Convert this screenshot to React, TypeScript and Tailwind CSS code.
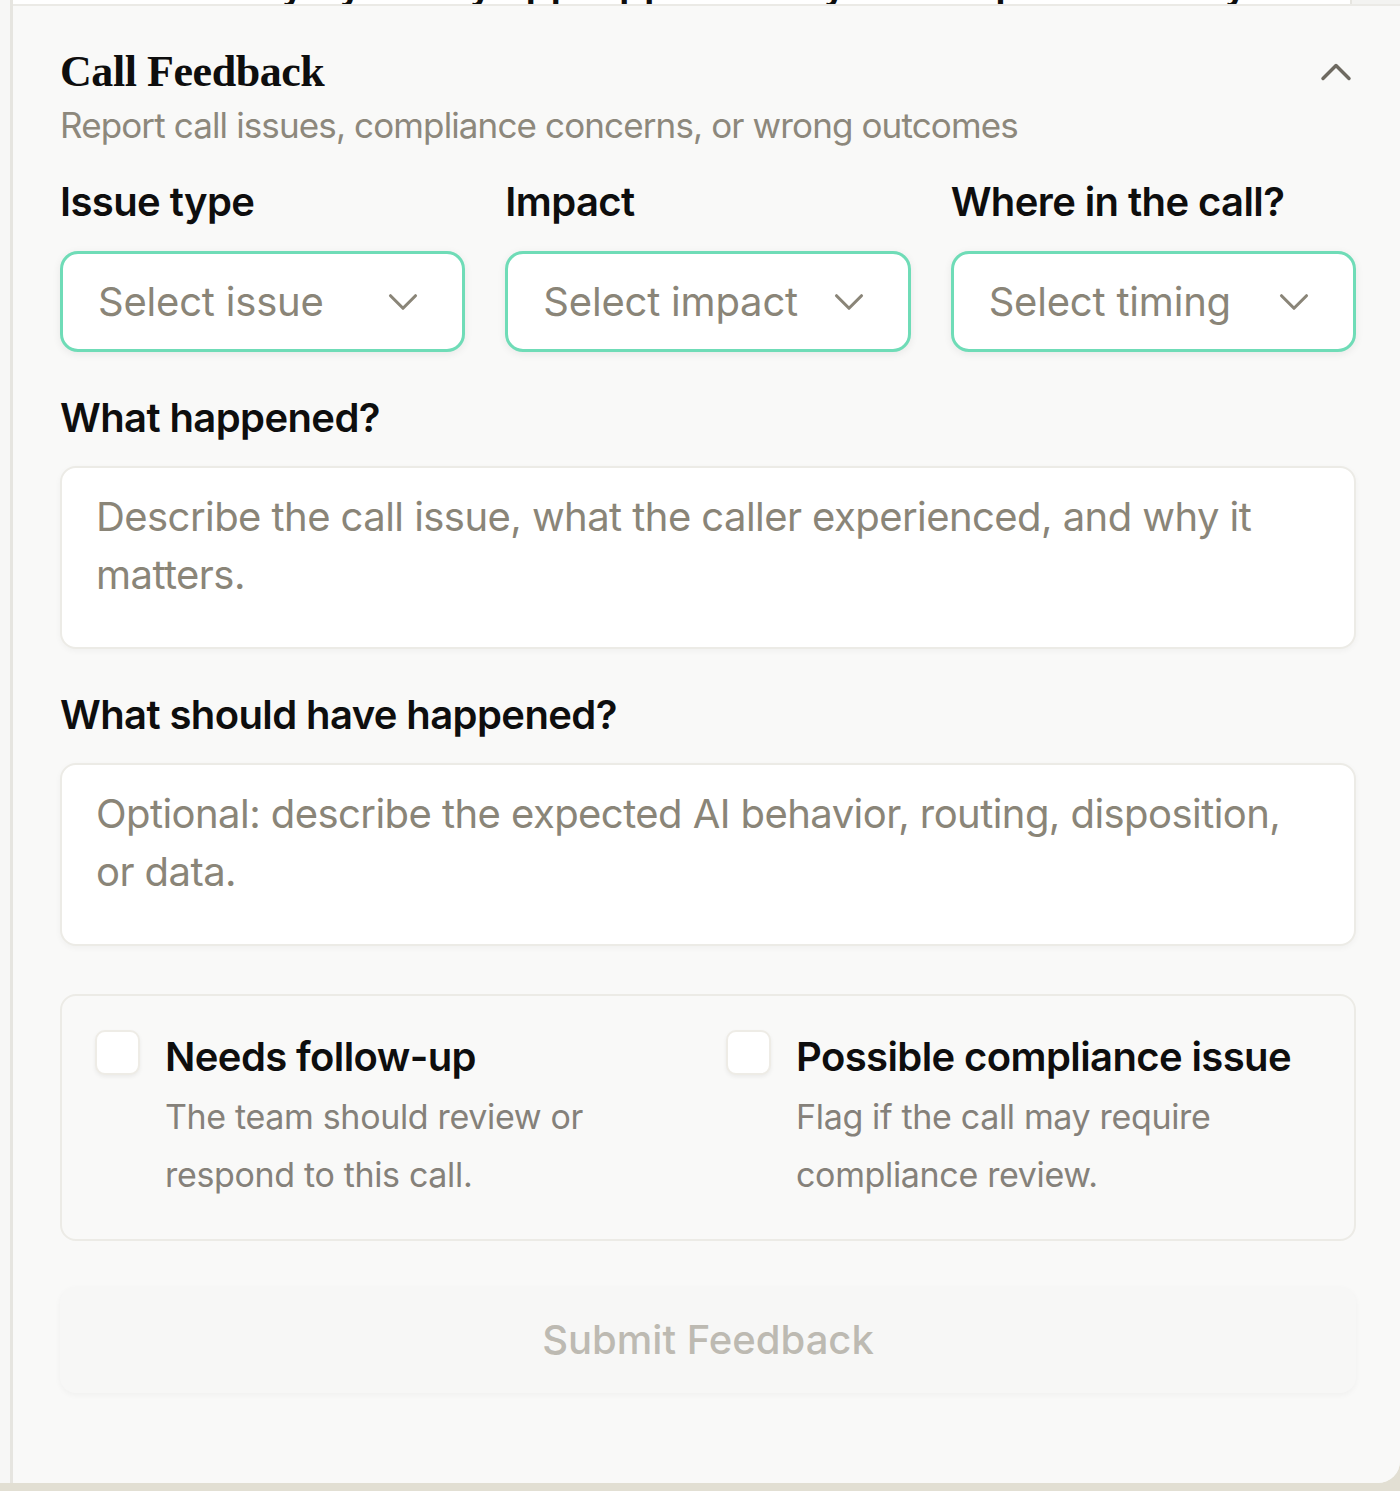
import React from 'react';
import { ChevronDown, ChevronUp } from 'lucide-react';

const selects = [
  { label: 'Issue type', placeholder: 'Select issue' },
  { label: 'Impact', placeholder: 'Select impact' },
  { label: 'Where in the call?', placeholder: 'Select timing' },
];

const flags = [
  { title: 'Needs follow-up', text: 'The team should review or respond to this call.' },
  { title: 'Possible compliance issue', text: 'Flag if the call may require compliance review.' },
];

function SelectBox({ placeholder }: { placeholder: string }) {
  return (
    <button className="w-full h-[101px] flex items-center justify-between pl-[35px] pr-[34px] bg-white border-[3px] border-[#6fdcb7] rounded-[18px] shadow-[0_2px_8px_rgba(0,0,0,0.07)]">
      <span className="text-[40px] tracking-[-0.005em] text-[#8a8578]">{placeholder}</span>
      <ChevronDown size={50} strokeWidth={1.5} className="text-[#8a8578]" />
    </button>
  );
}

function TextBox({ placeholder }: { placeholder: string }) {
  return (
    <div className="h-[183px] bg-white border-2 border-[#ecebe6] rounded-[16px] px-[34px] pt-[20px] shadow-[0_2px_6px_rgba(0,0,0,0.04)]">
      <p className="text-[40px] leading-[58px] tracking-[-0.014em] text-[#8a8578]">{placeholder}</p>
    </div>
  );
}

export default function App() {
  return (
    <div className="bg-[#e2dfd3] h-[1491px] font-['Inter',sans-serif] text-[#0e0e0e]">
      <div className="h-[1483px] bg-[#f7f7f6] pl-[10px] rounded-br-[22px] overflow-hidden">
        <div className="h-full bg-[#f9f9f8] border-l-[3px] border-[#e6e5e0]">
          <div className="h-[6px] flex border-b-2 border-[#ebeae6]">
            <div className="w-[1339px] h-[4px] bg-white border-r-2 border-[#e6e5e0] overflow-hidden">
              <p className="-mt-[40px] pl-[170px] text-[40px] leading-[50px] font-semibold whitespace-nowrap">
                Ready by Friday appl app and they also hope to hear by the deadline
              </p>
            </div>
            <div className="flex-1 bg-[#f3f3f1]" />
          </div>

          <div className="pl-[47px] pr-[44px]">
            <div className="flex items-start justify-between pt-[42px]">
              <h2 className="font-['Liberation_Serif',serif] font-bold text-[44px] leading-[48px] tracking-[-0.01em]">
                Call Feedback
              </h2>
              <ChevronUp size={52} strokeWidth={1.6} className="text-[#6e6a61] mt-[-2px] mr-[-6px]" />
            </div>
            <p className="mt-[2px] text-[35px] leading-[50px] tracking-tight text-[#8d887c]">
              Report call issues, compliance concerns, or wrong outcomes
            </p>

            <div className="mt-[27px] grid grid-cols-3 gap-x-[40px]">
              {selects.map((s) => (
                <div key={s.label}>
                  <div className="text-[40px] leading-[50px] font-semibold tracking-[-0.015em]">{s.label}</div>
                  <div className="mt-[24px]">
                    <SelectBox placeholder={s.placeholder} />
                  </div>
                </div>
              ))}
            </div>

            <div className="mt-[41px] text-[40px] leading-[50px] font-semibold tracking-[-0.015em]">What happened?</div>
            <div className="mt-[23px]">
              <TextBox placeholder="Describe the call issue, what the caller experienced, and why it matters." />
            </div>

            <div className="mt-[41px] text-[40px] leading-[50px] font-semibold tracking-[-0.015em]">What should have happened?</div>
            <div className="mt-[23px]">
              <TextBox placeholder="Optional: describe the expected AI behavior, routing, disposition, or data." />
            </div>

            <div className="mt-[48px] h-[247px] border-2 border-[#ecebe6] rounded-[16px] px-[33px] pt-[34px] grid grid-cols-2 gap-x-[36px]">
              {flags.map((f) => (
                <label key={f.title} className="flex items-start gap-[25px]">
                  <span className="shrink-0 w-[45px] h-[45px] bg-white border-2 border-[#eeece6] rounded-[10px] shadow-[0_2px_4px_rgba(0,0,0,0.06)]" />
                  <span className="block mt-[2px]">
                    <span className="block text-[40px] leading-[50px] font-semibold tracking-[-0.015em]">{f.title}</span>
                    <span className="block mt-[6px] text-[34px] leading-[58px] tracking-[-0.01em] text-[#85817a] pr-[20px]">{f.text}</span>
                  </span>
                </label>
              ))}
            </div>

            <button className="mt-[46px] w-full h-[106px] rounded-[16px] bg-[#f7f7f6] shadow-[0_2px_6px_rgba(0,0,0,0.04)] text-[40px] font-medium text-[#bdbab2]">
              Submit Feedback
            </button>
          </div>
        </div>
      </div>
    </div>
  );
}
